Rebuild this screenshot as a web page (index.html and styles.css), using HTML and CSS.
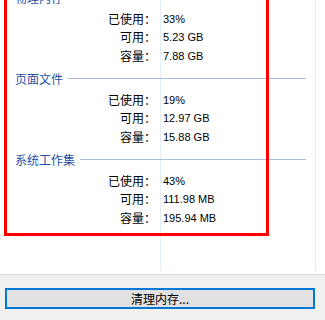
FILE: index.html
```html
<!DOCTYPE html>
<html lang="zh-CN">

<head>
    <meta charset="UTF-8">
    <meta name="viewport" content="width=device-width, initial-scale=1.0">
    <title>内存</title>
    <link rel="stylesheet" href="styles.css">
</head>

<body>
    <div class="panel">
        <div class="group">
            <div class="group-title"><span>物理内存</span><i class="rule"></i></div>
            <div class="row"><span class="label">已使用：</span><span class="value">33%</span></div>
            <div class="row"><span class="label">可用：</span><span class="value">5.23 GB</span></div>
            <div class="row"><span class="label">容量：</span><span class="value">7.88 GB</span></div>
        </div>
        <div class="group">
            <div class="group-title"><span>页面文件</span><i class="rule"></i></div>
            <div class="row"><span class="label">已使用：</span><span class="value">19%</span></div>
            <div class="row"><span class="label">可用：</span><span class="value">12.97 GB</span></div>
            <div class="row"><span class="label">容量：</span><span class="value">15.88 GB</span></div>
        </div>
        <div class="group">
            <div class="group-title"><span>系统工作集</span><i class="rule"></i></div>
            <div class="row"><span class="label">已使用：</span><span class="value">43%</span></div>
            <div class="row"><span class="label">可用：</span><span class="value">111.98 MB</span></div>
            <div class="row"><span class="label">容量：</span><span class="value">195.94 MB</span></div>
        </div>
        <!-- red highlight drawn over the list -->
        <div class="highlight"></div>
    </div>
    <div class="footer">
        <button type="button" class="btn">清理内存...</button>
    </div>
</body>

</html>
```

FILE: styles.css
```css
html,
body {
    margin: 0;
    padding: 0;
}

body {
    width: 325px;
    height: 320px;
    overflow: hidden;
    font-family: "Noto Sans CJK SC", sans-serif;
    font-size: 12px;
    color: #000;
    background-color: #f0f0f0;
}

.panel {
    position: relative;
    height: 274px;
    overflow: hidden;
    border-bottom: 1px solid #dadada;
    background:
        linear-gradient(#e5edf7, #e5edf7) 160px 0 / 1px 271px no-repeat,
        linear-gradient(#ebebeb, #ebebeb) 315px 0 / 1px 271px no-repeat,
        #fff;
}

.group {
    margin-bottom: 5.5px;
}

.group:first-child {
    margin-top: -10.5px;
}

.group-title {
    display: flex;
    align-items: center;
    height: 16px;
    line-height: 16px;
    margin-bottom: 4px;
    padding-left: 15px;
    padding-right: 19px;
    color: #1f4fa3;
}

.rule {
    flex: 1;
    height: 1px;
    margin-left: 5px;
    background-color: #a9bde3;
}

.row {
    display: flex;
    height: 18.5px;
    line-height: 18.5px;
}

.label {
    width: 156px;
    text-align: right;
}

.value {
    padding-left: 7px;
    font-family: "Liberation Sans", sans-serif;
    font-size: 11px;
}

.highlight {
    position: absolute;
    left: 4px;
    top: -10px;
    width: 265px;
    height: 246px;
    box-sizing: border-box;
    border: 3px solid #ff0000;
}

.footer {
    padding: 13px 10px 0 5px;
}

.btn {
    display: block;
    width: 100%;
    height: 21px;
    padding: 0;
    border: 2px solid #0078d7;
    background-color: #e1e1e1;
    font-family: "Noto Sans CJK SC", sans-serif;
    font-size: 12px;
    line-height: 16px;
    color: #000;
}
```
